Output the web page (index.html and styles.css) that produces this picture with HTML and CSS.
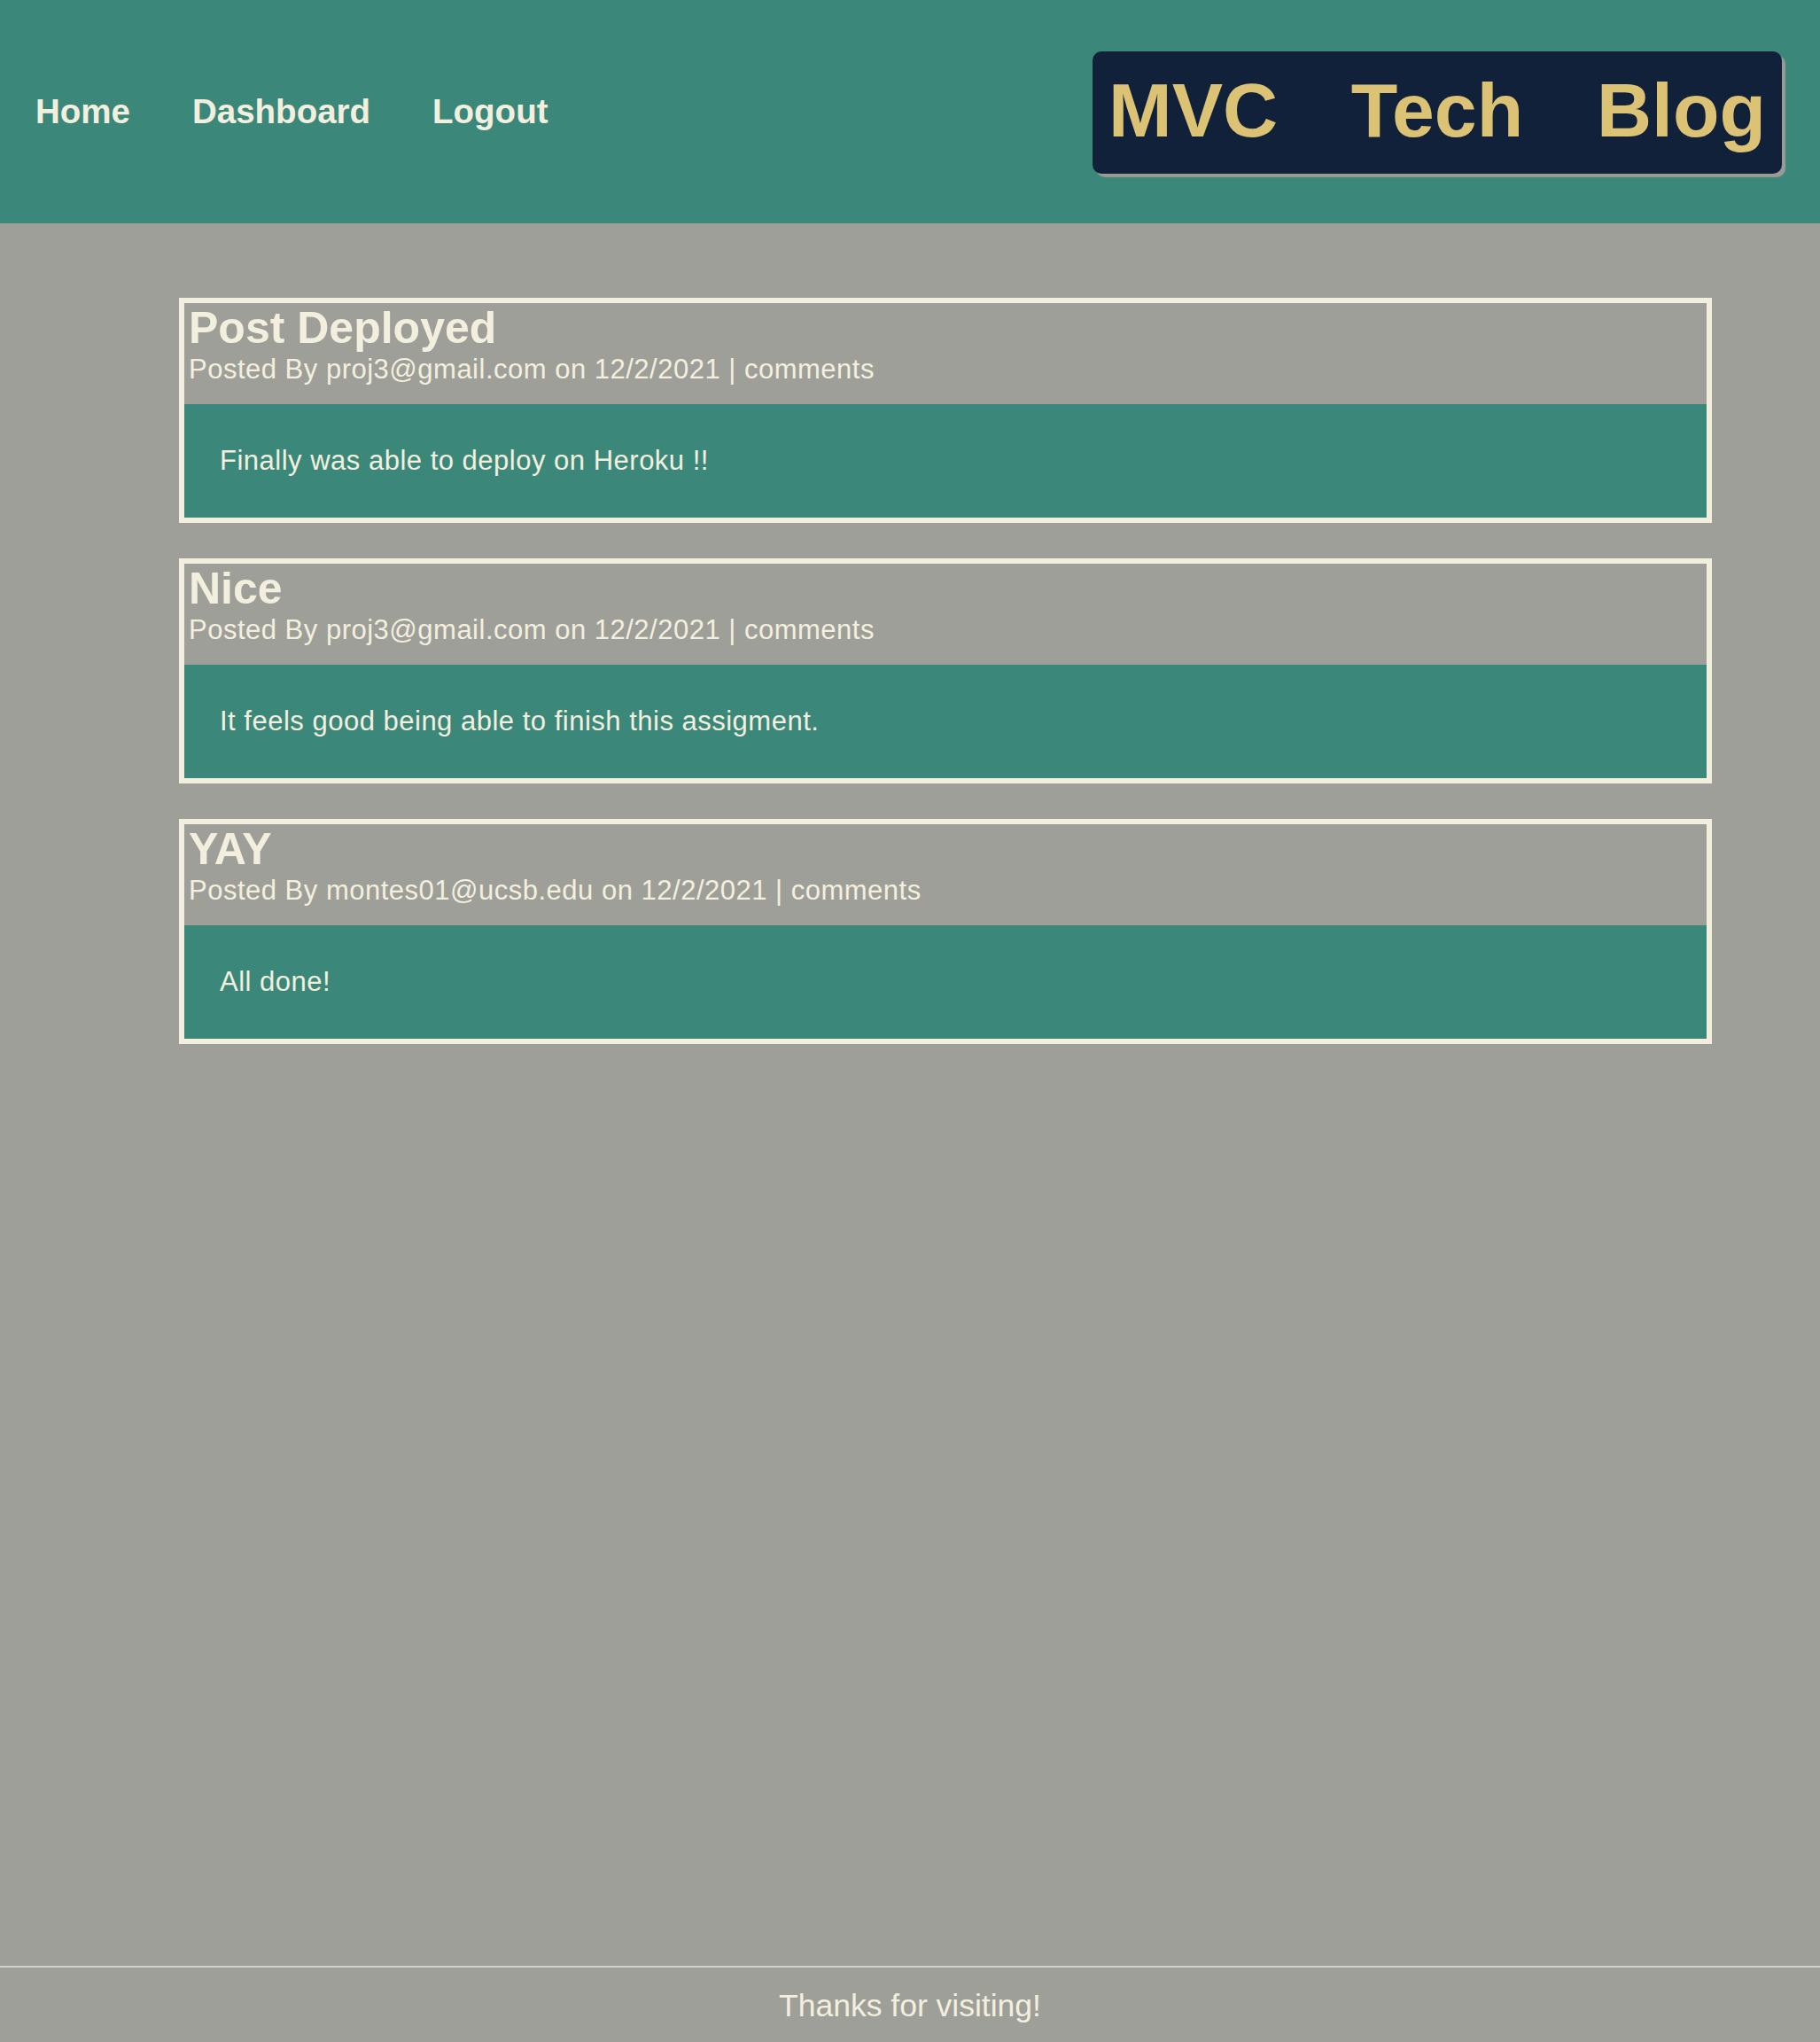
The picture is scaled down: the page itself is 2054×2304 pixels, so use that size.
FILE: index.html
```html
<!DOCTYPE html>
<html lang="en">
<head>
<meta charset="utf-8">
<title>MVC Tech Blog</title>
<link rel="stylesheet" href="styles.css">
</head>
<body>
<header class="site-header">
  <nav class="nav">
    <a class="nav-link" href="#">Home</a>
    <a class="nav-link" href="#">Dashboard</a>
    <a class="nav-link" href="#">Logout</a>
  </nav>
  <div class="logo"><span>MVC</span><span>Tech</span><span>Blog</span></div>
</header>
<main class="posts">
  <article class="post">
    <div class="post-head">
      <h2 class="post-title">Post Deployed</h2>
      <p class="post-meta">Posted By proj3@gmail.com on 12/2/2021 | comments</p>
    </div>
    <div class="post-body">Finally was able to deploy on Heroku !!</div>
  </article>
  <article class="post">
    <div class="post-head">
      <h2 class="post-title">Nice</h2>
      <p class="post-meta">Posted By proj3@gmail.com on 12/2/2021 | comments</p>
    </div>
    <div class="post-body">It feels good being able to finish this assigment.</div>
  </article>
  <article class="post">
    <div class="post-head">
      <h2 class="post-title">YAY</h2>
      <p class="post-meta">Posted By montes01@ucsb.edu on 12/2/2021 | comments</p>
    </div>
    <div class="post-body">All done!</div>
  </article>
</main>
<footer class="site-footer">Thanks for visiting!</footer>
</body>
</html>
```
FILE: styles.css
```css
html, body {
  margin: 0;
  padding: 0;
}
body {
  background: #9f9f99;
  color: #f3efde;
  font-family: "Liberation Sans", Arial, Helvetica, sans-serif;
  min-height: 100vh;
  display: flex;
  flex-direction: column;
}
.site-header {
  background: #3b887b;
  height: 252px;
  display: flex;
  align-items: center;
  justify-content: space-between;
  padding: 0 43px 0 40px;
  box-sizing: border-box;
}
.nav {
  display: flex;
  gap: 70px;
}
.nav-link {
  color: #f3efde;
  text-decoration: none;
  font-weight: bold;
  font-size: 38.5px;
}
.logo {
  width: 778px;
  box-sizing: border-box;
  background: #12213a;
  color: #dbc274;
  font-weight: bold;
  font-size: 86px;
  line-height: 1.149;
  padding: 17px 18px 22px 18px;
  border-radius: 10px;
  box-shadow: 4px 4px 1px #9a9a96;
  display: flex;
  justify-content: space-between;
  margin-top: 2px;
}
.posts {
  flex: 1;
  display: flex;
  flex-direction: column;
  gap: 40px;
  margin: 84px 122px 0 202px;
}
.post {
  border: 6px solid #f3efde;
}
.post-head {
  height: 114px;
  box-sizing: border-box;
  padding: 3px 5px 0;
}
.post-title {
  margin: 0;
  font-size: 50px;
  line-height: 50px;
  font-weight: bold;
}
.post-meta {
  margin: 4px 0 0 0;
  font-size: 31px;
  line-height: 36px;
  letter-spacing: 0.5px;
}
.post-body {
  background: #3b887b;
  font-size: 31px;
  line-height: 36px;
  letter-spacing: 0.5px;
  height: 128px;
  box-sizing: border-box;
  padding: 46px 40px;
}
.site-footer {
  border-top: 2px solid #d0d0cc;
  text-align: center;
  font-size: 35.5px;
  padding: 23px 0 20px;
}
```
